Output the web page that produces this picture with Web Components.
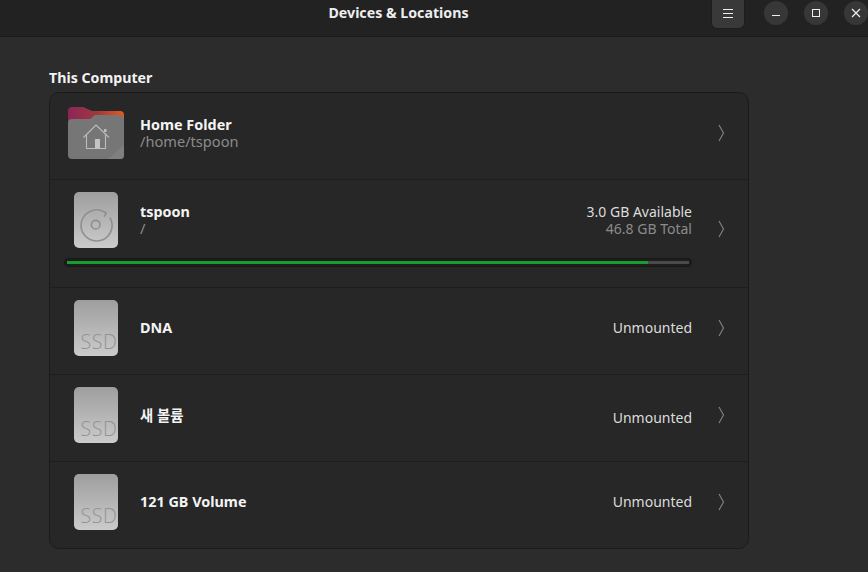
<!DOCTYPE html>
<html lang="en">
<head>
<meta charset="UTF-8">
<title>Devices &amp; Locations</title>
<style>
    html, body { margin: 0; height: 100%; background: #2c2c2c; overflow: hidden; }
    body { font-family: "Noto Sans", "Noto Sans CJK KR", sans-serif; }
</style>
</head>
<body>
<app-window>
    <title-bar slot="bar">Devices &amp; Locations</title-bar>
    <place-list heading="This Computer">
        <place-row>
            <home-icon slot="icon"></home-icon>
            Home Folder
            <span slot="sub">/home/tspoon</span>
        </place-row>
        <place-row used="93.4" tall>
            <disk-icon slot="icon" kind="system"></disk-icon>
            tspoon
            <span slot="sub">/</span>
            <span slot="info">3.0 GB Available</span>
            <span slot="detail">46.8 GB Total</span>
        </place-row>
        <place-row short>
            <disk-icon slot="icon"></disk-icon>
            DNA
            <span slot="info">Unmounted</span>
        </place-row>
        <place-row drop>
            <disk-icon slot="icon"></disk-icon>
            새 볼륨
            <span slot="info">Unmounted</span>
        </place-row>
        <place-row short>
            <disk-icon slot="icon"></disk-icon>
            121 GB Volume
            <span slot="info">Unmounted</span>
        </place-row>
    </place-list>
</app-window>

<script>
    function define(name, html, setup) {
        const template = document.createElement('template');
        template.innerHTML = html;
        customElements.define(name, class extends HTMLElement {
            connectedCallback() {
                if (this.shadowRoot) return;
                this.attachShadow({mode: 'open'});
                this.shadowRoot.appendChild(template.content.cloneNode(true));
                if (setup) setup(this, this.shadowRoot);
            }
        });
    }

    define('app-window', `
        <style>
        :host { display: flex; flex-direction: column; width: 868px; height: 572px; color: #fff; }
        main { flex: 1; padding: 32px 119px 0 49px; }
        </style>
        <slot name="bar"></slot>
        <main><slot></slot></main>`);

    define('title-bar', `
        <style>
        :host {
            display: flex; align-items: flex-start; flex: none;
            height: 36px; padding-left: 328px;
            background: #222222; border-bottom: 1px solid #191919;
        }
        h1 {
            margin: 4px 0 0; width: 141px; font-size: 14.2px; line-height: 18px;
            font-weight: 700; color: #eeeeee; white-space: nowrap; text-align: center;
        }
        .controls { margin-left: auto; display: flex; align-items: flex-start; }
        .menu {
            width: 34px; height: 29px; box-sizing: border-box; margin-right: 19px;
            display: flex; align-items: center; justify-content: center;
            background: #393939; border: 1px solid #1d1d1d; border-top: 0;
            border-radius: 0 0 6px 6px;
        }
        .round {
            width: 24px; height: 24px; margin: 1px 0 0 16px; border-radius: 50%;
            background: #373737; display: flex; align-items: center; justify-content: center;
        }
        .menu + .round { margin-left: 0; }
        svg { display: block; fill: none; stroke: #eeeeee; stroke-width: 1; }
        </style>
        <h1><slot></slot></h1>
        <div class="controls">
            <div class="menu"><svg width="12" height="10"><path d="M1 .5H11M1 4.5H11M1 8.5H11" shape-rendering="crispEdges"/></svg></div>
            <div class="round"><svg width="10" height="10"><path d="M1 7.5H9" shape-rendering="crispEdges"/></svg></div>
            <div class="round"><svg width="10" height="10"><rect x="1.5" y="1.5" width="7" height="7" shape-rendering="crispEdges"/></svg></div>
            <div class="round"><svg width="10" height="10"><path d="M1 1L9 9M9 1L1 9" stroke-width="1.2"/></svg></div>
        </div>`);

    define('place-list', `
        <style>
        :host { display: block; }
        h2 {
            margin: 0 0 5px; font-size: 14.2px; line-height: 18px; font-weight: 700; color: #f2f2f2;
        }
        .card {
            display: flex; flex-direction: column;
            background: #272727; border: 1px solid #1b1b1b; border-radius: 10px; overflow: hidden;
        }
        ::slotted(place-row:not(:last-child)) { border-bottom: 1px solid #1e1e1e; }
        </style>
        <h2></h2>
        <div class="card"><slot></slot></div>`, (el, root) => {
            root.querySelector('h2').textContent = el.getAttribute('heading');
        });

    define('place-row', `
        <style>
        :host { display: block; font-size: 14px; height: 86px; }
        :host([tall]) { height: 107px; }
        .line {
            display: grid; grid-template-columns: 90px 1fr auto 56px; align-items: center;
            height: 80px;
        }
        .icon { display: flex; justify-content: center; padding-left: 1px; margin-left: 1px; }
        .name { font-weight: 700; color: #f4f4f4; font-size: 14.4px; line-height: 17px; white-space: nowrap; }
        .sub, .detail { color: #8b8b8b; font-size: 14.6px; line-height: 17px; }
        .detail { font-size: 14px; }
        .info { color: #dcdcdc; font-size: 14px; line-height: 17px; }
        .right { text-align: right; white-space: nowrap; }
        :host([short]) .text, :host([short]) .right { padding-bottom: 2px; }
        :host([drop]) .right { padding-top: 4px; }
        .chev { justify-self: end; margin-right: 23px; display: block; }
        :host([tall]) .chev { margin-top: 18px; }
        .bar {
            display: none; box-sizing: border-box; margin: -2px 0 0 14px; width: 628px; height: 9px;
            padding: 2px; background: #1d1d1d; border-radius: 4px; border: 1px solid #181818;
        }
        :host([used]) .bar { display: block; }
        .track { height: 3px; background: #4a4a4a; }
        .fill { height: 100%; background: #189c2d; }
        </style>
        <div class="line">
            <div class="icon"><slot name="icon"></slot></div>
            <div class="text">
                <div class="name"><slot></slot></div>
                <div class="sub"><slot name="sub"></slot></div>
            </div>
            <div class="right">
                <div class="info"><slot name="info"></slot></div>
                <div class="detail"><slot name="detail"></slot></div>
            </div>
            <svg class="chev" width="7" height="18" fill="none" stroke="#858585" stroke-width="1.1"><path d="M1 1L5.5 9L1 17"/></svg>
        </div>
        <div class="bar"><div class="track"><div class="fill"></div></div></div>`, (el, root) => {
            if (el.hasAttribute('used')) root.querySelector('.fill').style.width = el.getAttribute('used') + '%';
        });

    define('home-icon', `
        <style>:host { display: block; width: 56px; height: 52px; } svg { display: block; }</style>
        <svg width="56" height="52" viewBox="0 0 56 52">
            <defs>
                <linearGradient id="tab" x1="0" y1="0" x2="1" y2="0">
                    <stop offset="0" stop-color="#8b2558"/>
                    <stop offset=".55" stop-color="#a33a3c"/>
                    <stop offset="1" stop-color="#e8591e"/>
                </linearGradient>
            </defs>
            <path d="M4 0H15L24 4H52a4 4 0 0 1 4 4V20H0V4a4 4 0 0 1 4-4Z" fill="url(#tab)"/>
            <path d="M4 12H22L27 8H52a4 4 0 0 1 4 4V48a4 4 0 0 1-4 4H4a4 4 0 0 1-4-4V16a4 4 0 0 1 4-4Z" fill="#767676"/>
            <path d="M56 38V48a4 4 0 0 1-4 4H40Z" fill="#7f7f7f"/>
            <path d="M15.5 30.5L28 18L41 30.5M18.5 27.5V41.5H37.5V27.5" fill="none" stroke="#bdbdbd" stroke-width="1.1"/>
            <rect x="27" y="32" width="5" height="9.5" fill="#c4c4c4"/>
            <rect x="36" y="22" width="2.5" height="3" fill="#bdbdbd"/>
        </svg>`);

    define('disk-icon', `
        <style>
        :host { display: block; width: 44px; height: 56px; }
        svg { display: block; }
        text { font-family: "Open Sans", "Noto Sans", sans-serif; font-weight: 300; font-size: 19.6px; letter-spacing: .6px; fill: #939393; }
        </style>
        <svg width="44" height="56" viewBox="0 0 44 56">
            <defs>
                <linearGradient id="body" x1="0" y1="0" x2="0" y2="1">
                    <stop offset="0" stop-color="#9e9e9e"/>
                    <stop offset="1" stop-color="#cbcbcb"/>
                </linearGradient>
                <clipPath id="edge"><rect width="44" height="56" rx="5"/></clipPath>
            </defs>
            <rect width="44" height="56" rx="5" fill="url(#body)"/>
            <g class="ssd" clip-path="url(#edge)"><text x="6.5" y="49">SSD</text></g>
            <g class="system" fill="none" stroke="#8f8f8f" stroke-width="1.6">
                <path d="M36 25.7A15.5 15.5 0 1 1 32.1 21.2L30.3 24.7"/>
                <circle cx="21.7" cy="32.7" r="4.3"/>
            </g>
        </svg>`, (el, root) => {
            root.querySelector(el.getAttribute('kind') === 'system' ? '.ssd' : '.system').remove();
        });
</script>
</body>
</html>
